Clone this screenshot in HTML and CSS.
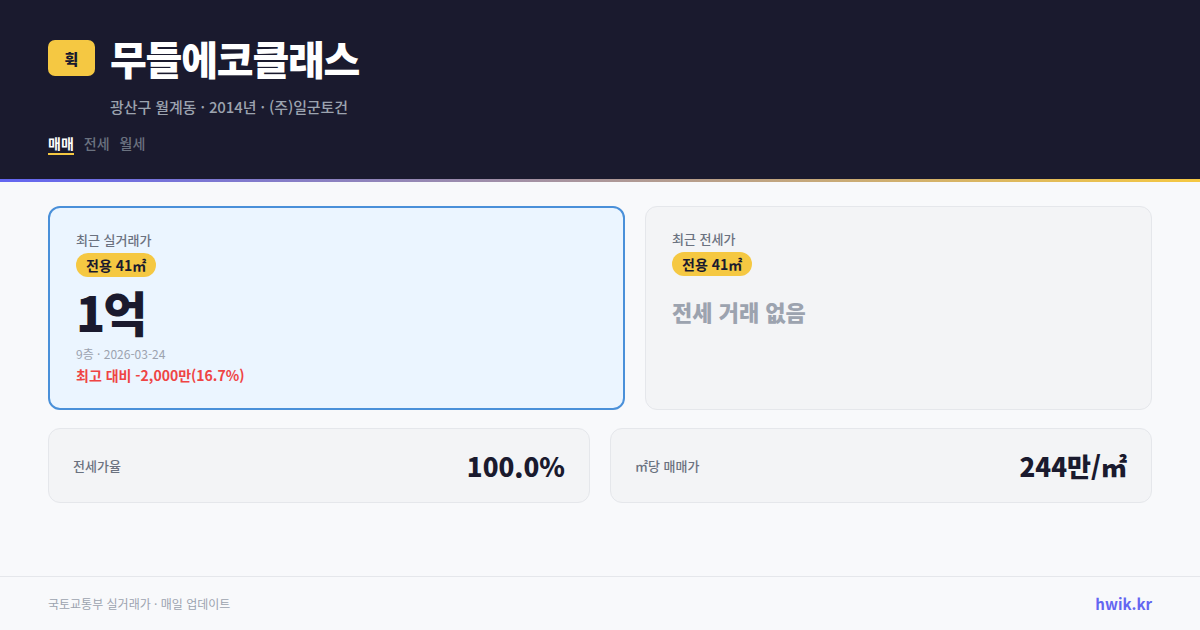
FILE: index.html
```html
<!DOCTYPE html>
<html lang="ko">
<head>
<meta charset="utf-8">
<link rel="stylesheet" href="styles.css">
</head>
<body>
<div class="page">
  <header class="hero">
    <div class="head-grid">
      <div class="logo">휙</div>
      <h1 class="title">무들에코클래스</h1>
      <div class="sub">광산구 월계동 · 2014년 · (주)일군토건</div>
    </div>
    <nav class="tabs">
      <span class="tab active">매매</span>
      <span class="tab">전세</span>
      <span class="tab">월세</span>
    </nav>
  </header>
  <div class="accent"></div>
  <main class="main">
    <div class="row-top">
      <section class="card card-hl">
        <div class="label">최근 실거래가</div>
        <span class="badge">전용 41㎡</span>
        <div class="price">1억</div>
        <div class="meta">9층 · 2026-03-24</div>
        <div class="diff">최고 대비 -2,000만(16.7%)</div>
      </section>
      <section class="card card-plain">
        <div class="label">최근 전세가</div>
        <span class="badge">전용 41㎡</span>
        <div class="empty">전세 거래 없음</div>
      </section>
    </div>
    <div class="row-bottom">
      <section class="stat">
        <span class="stat-label">전세가율</span>
        <span class="stat-value">100.0%</span>
      </section>
      <section class="stat">
        <span class="stat-label">㎡당 매매가</span>
        <span class="stat-value">244만/㎡</span>
      </section>
    </div>
  </main>
  <footer class="foot">
    <span class="src">국토교통부 실거래가 · 매일 업데이트</span>
    <span class="brand">hwik.kr</span>
  </footer>
</div>
</body>
</html>
```
FILE: styles.css
```css
* { box-sizing: border-box; margin: 0; padding: 0; }
html, body { width: 1200px; height: 630px; overflow: hidden; }
body {
  font-family: "Noto Sans CJK KR", "Noto Sans", sans-serif;
  background: #f8f9fb;
  color: #1a1a2e;
}
.page { display: flex; flex-direction: column; height: 630px; }
.hero {
  background: #1a1a2e;
  padding: 32px 48px 24px;
}
.head-grid {
  display: grid;
  grid-template-columns: 47px auto;
  column-gap: 15px;
  row-gap: 13px;
  align-items: center;
}
.logo {
  width: 47px;
  height: 36px;
  border-radius: 7px;
  background: #f5c842;
  color: #1a1a2e;
  font-weight: 900;
  font-size: 15px;
  display: flex;
  align-items: center;
  justify-content: center;
}
.title {
  color: #ffffff;
  font-size: 40px;
  font-weight: 900;
  line-height: 52px;
  letter-spacing: -1.2px;
}
.sub {
  grid-column: 2;
  color: #9ca3af;
  font-size: 15px;
  font-weight: 500;
  line-height: 20px;
  letter-spacing: -0.1px;
}
.tabs { display: flex; gap: 10px; margin-top: 16px; }
.tab {
  color: #6b7280;
  font-size: 14px;
  font-weight: 500;
  line-height: 20px;
  padding-bottom: 2px;
}
.tab.active {
  color: #ffffff;
  font-weight: 700;
  border-bottom: 2px solid #f5c842;
  padding-bottom: 0;
}
.accent { height: 3px; background: linear-gradient(90deg, #6366f1, #f5c842); }
.main { flex: 1; padding: 24px 48px 0; }
.row-top {
  display: grid;
  grid-template-columns: 577fr 507fr;
  gap: 20px;
}
.card {
  border-radius: 12px;
  padding: 23px 26px 22px;
  display: flex;
  flex-direction: column;
  align-items: flex-start;
  min-height: 204px;
}
.card-hl { background: #ebf5ff; border: 2px solid #4a90d9; }
.card-plain { background: #f3f4f6; border: 1px solid #e5e7eb; padding-left: 26px; }
.label { color: #6b7280; font-size: 13px; font-weight: 500; line-height: 18px; }
.badge {
  margin-top: 4px;
  background: #f5c842;
  color: #1a1a2e;
  font-size: 14px;
  font-weight: 700;
  line-height: 20px;
  padding: 2px 10px;
  border-radius: 999px;
}
.price { font-size: 48px; font-weight: 900; line-height: 60px; margin-top: 4px; letter-spacing: -2px; }
.meta { color: #9ca3af; font-size: 12px; line-height: 18px; margin-top: 4px; }
.diff { color: #ef4444; font-size: 14px; font-weight: 700; line-height: 20px; margin-top: 2px; }
.empty { color: #9ca3af; font-size: 22px; font-weight: 900; line-height: 30px; margin-top: 20px; }
.row-bottom {
  display: grid;
  grid-template-columns: 1fr 1fr;
  gap: 20px;
  margin-top: 18px;
}
.stat {
  background: #f3f4f6;
  border: 1px solid #e5e7eb;
  border-radius: 12px;
  height: 75px;
  padding: 0 24px;
  display: flex;
  align-items: center;
  justify-content: space-between;
}
.stat-label { color: #6b7280; font-size: 13px; font-weight: 500; }
.stat-value { font-size: 26px; font-weight: 900; color: #1a1a2e; }
.foot {
  height: 54px;
  border-top: 1px solid #e5e7eb;
  padding: 0 48px;
  display: flex;
  align-items: center;
  justify-content: space-between;
}
.src { color: #9ca3af; font-size: 12px; }
.brand { color: #6366f1; font-size: 15px; font-weight: 700; }
```
